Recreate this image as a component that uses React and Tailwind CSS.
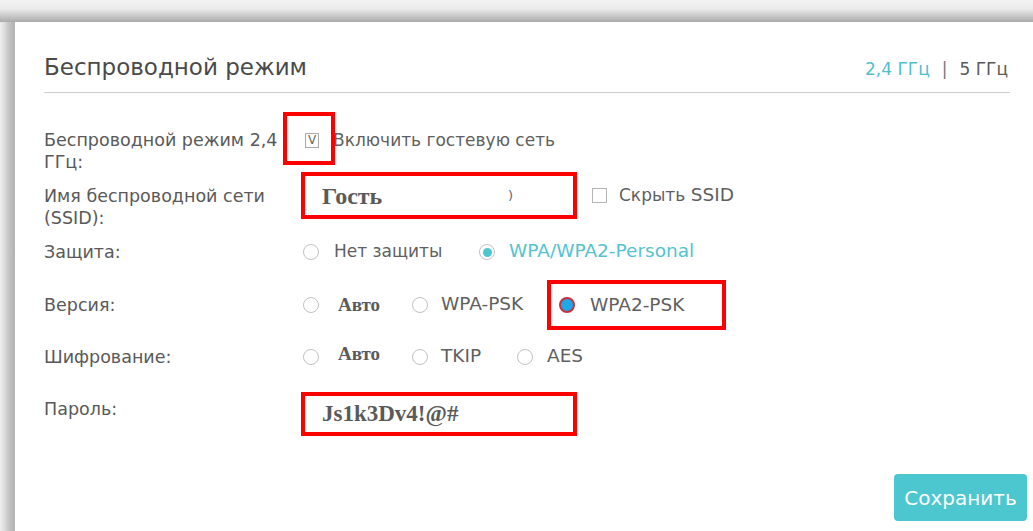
import React from "react";

const label = "text-[17.5px] leading-[22px] text-[#595959]";
const opt = "text-[17px] leading-[22px] text-[#5f5f5f]";
const latin = "text-[18.5px] leading-[22px] text-[#5f5f5f]";
const serifBold = "font-['Liberation_Serif',serif] font-bold text-[#5a5a5a]";

const Radio = ({ checked }) => (
  <span className="inline-flex h-[16px] w-[16px] shrink-0 items-center justify-center rounded-full border-[1.5px] border-[#c2c2c2] bg-white">
    {checked && <span className="h-[9px] w-[9px] rounded-full bg-[#4cc6d0]" />}
  </span>
);

// one radio + caption, in a cell of fixed width so the next one lines up
const Option = ({ width, gap, checked, children }) => (
  <div className={`flex shrink-0 items-center ${width}`}>
    <Radio checked={checked} />
    <div className={gap}>{children}</div>
  </div>
);

const Highlight = ({ className = "", children }) => (
  <div className={`border-[4px] border-[#ff0000] bg-white ${className}`}>{children}</div>
);

export default function App() {
  return (
    <div className="flex h-screen w-full flex-col overflow-hidden bg-white font-['DejaVu_Sans',sans-serif]">
      {/* window edge shadow */}
      <div className="h-[22px] shrink-0 bg-[linear-gradient(to_bottom,#f2f2f2_0%,#ebebeb_40%,#d4d4d4_62%,#aaaaaa_100%)]" />
      <div className="flex flex-1">
        <div className="w-[15px] shrink-0 bg-[linear-gradient(to_right,#eeeeee_0%,#dcdcdc_30%,#c6c6c6_55%,#b2b2b2_100%)]" />

        <div className="flex flex-1 flex-col bg-white">
          <div className="pl-[29px] pr-[23px]">
            {/* header */}
            <div className="flex h-[71px] items-end justify-between border-b border-[#cfcfcf] pb-[10px]">
              <h1 className="text-[23px] leading-[30px] text-[#4a4a4a]">Беспроводной режим</h1>
              <div className="mb-[2px] flex items-center gap-[12px] pr-[2px] text-[17px] leading-[22px]">
                <span className="text-[#4fbfcc]">2,4 ГГц</span>
                <span className="text-[#777]">|</span>
                <span className="text-[#5a5a5a]">5 ГГц</span>
              </div>
            </div>

            {/* guest network */}
            <div className="mt-[36px] flex">
              <div className={`w-[257px] shrink-0 ${label}`}>
                Беспроводной режим 2,4
                <br />
                ГГц:
              </div>
              <div className="flex h-[22px] items-center">
                <div className="relative ml-[4px] h-[15px] w-[14px] border border-[#a9a9a9] bg-white">
                  <span className="absolute inset-0 flex items-center justify-center text-[12px] leading-none text-[#666]">
                    V
                  </span>
                  <div className="absolute left-[-23px] top-[-22px] z-10 h-[53px] w-[52px] border-[4px] border-[#ff0000]" />
                </div>
                <span className={`ml-[14px] ${opt}`}>Включить гостевую сеть</span>
              </div>
            </div>

            {/* ssid */}
            <div className="mt-[12px] flex">
              <div className={`w-[257px] shrink-0 ${label}`}>
                Имя беспроводной сети
                <br />
                (SSID):
              </div>
              <Highlight className="-mt-[13px] flex h-[47px] w-[276px] items-center pl-[17px] pr-[60px]">
                <span className={`${serifBold} text-[24px]`}>Гость</span>
                <span className="ml-auto text-[13px] text-[#666]">)</span>
              </Highlight>
              <div className="-mt-[1px] ml-[15px] flex h-[22px] items-center">
                <span className="h-[15px] w-[15px] border border-[#b5b5b5] bg-white" />
                <span className={`ml-[12px] ${opt}`}>
                  Скрыть <span className="text-[18.5px]">SSID</span>
                </span>
              </div>
            </div>

            {/* security */}
            <div className="mt-[11px] flex items-center">
              <div className={`w-[259px] shrink-0 ${label}`}>Защита:</div>
              <Option width="w-[176px]" gap="ml-[15px]">
                <span className={opt}>Нет защиты</span>
              </Option>
              <Option checked gap="ml-[14px]">
                <span className={`${latin} text-[#55c3cf]`}>WPA/WPA2-Personal</span>
              </Option>
            </div>

            {/* version */}
            <div className="mt-[30px] flex h-[22px] items-center">
              <div className={`w-[259px] shrink-0 ${label}`}>Версия:</div>
              <Option width="w-[109px]" gap="ml-[19px]">
                <span className={`text-[19px] ${serifBold}`}>Авто</span>
              </Option>
              <Option width="w-[135px]" gap="ml-[13px]">
                <span className={latin}>WPA-PSK</span>
              </Option>
              <Highlight className="flex h-[50px] w-[179px] shrink-0 items-center pl-[8px]">
                <span className="h-[16px] w-[16px] rounded-full border-[2px] border-[#c8303f] bg-[#1ea8e6]" />
                <span className={`ml-[15px] ${latin}`}>WPA2-PSK</span>
              </Highlight>
            </div>

            {/* encryption */}
            <div className="mt-[30px] flex h-[22px] items-center">
              <div className={`w-[259px] shrink-0 ${label}`}>Шифрование:</div>
              <Option width="w-[109px]" gap="-mt-[5px] ml-[19px]">
                <span className={`text-[19px] ${serifBold}`}>Авто</span>
              </Option>
              <Option width="w-[105px]" gap="ml-[13px]">
                <span className={latin}>TKIP</span>
              </Option>
              <Option gap="ml-[14px]">
                <span className={latin}>AES</span>
              </Option>
            </div>

            {/* password */}
            <div className="mt-[30px] flex">
              <div className={`w-[257px] shrink-0 ${label}`}>Пароль:</div>
              <Highlight className="-mt-[6px] flex h-[44px] w-[276px] items-start pl-[17px] pt-[1px]">
                <span className={`${serifBold} text-[23px]`}>Js1k3Dv4!@#</span>
              </Highlight>
            </div>
          </div>

          <div className="mt-[38px] flex justify-end pr-[6px]">
            <button className="h-[47px] w-[133px] rounded-[4px] bg-[#4cc6cf] text-[20px] text-white">
              Сохранить
            </button>
          </div>
        </div>
      </div>
    </div>
  );
}
